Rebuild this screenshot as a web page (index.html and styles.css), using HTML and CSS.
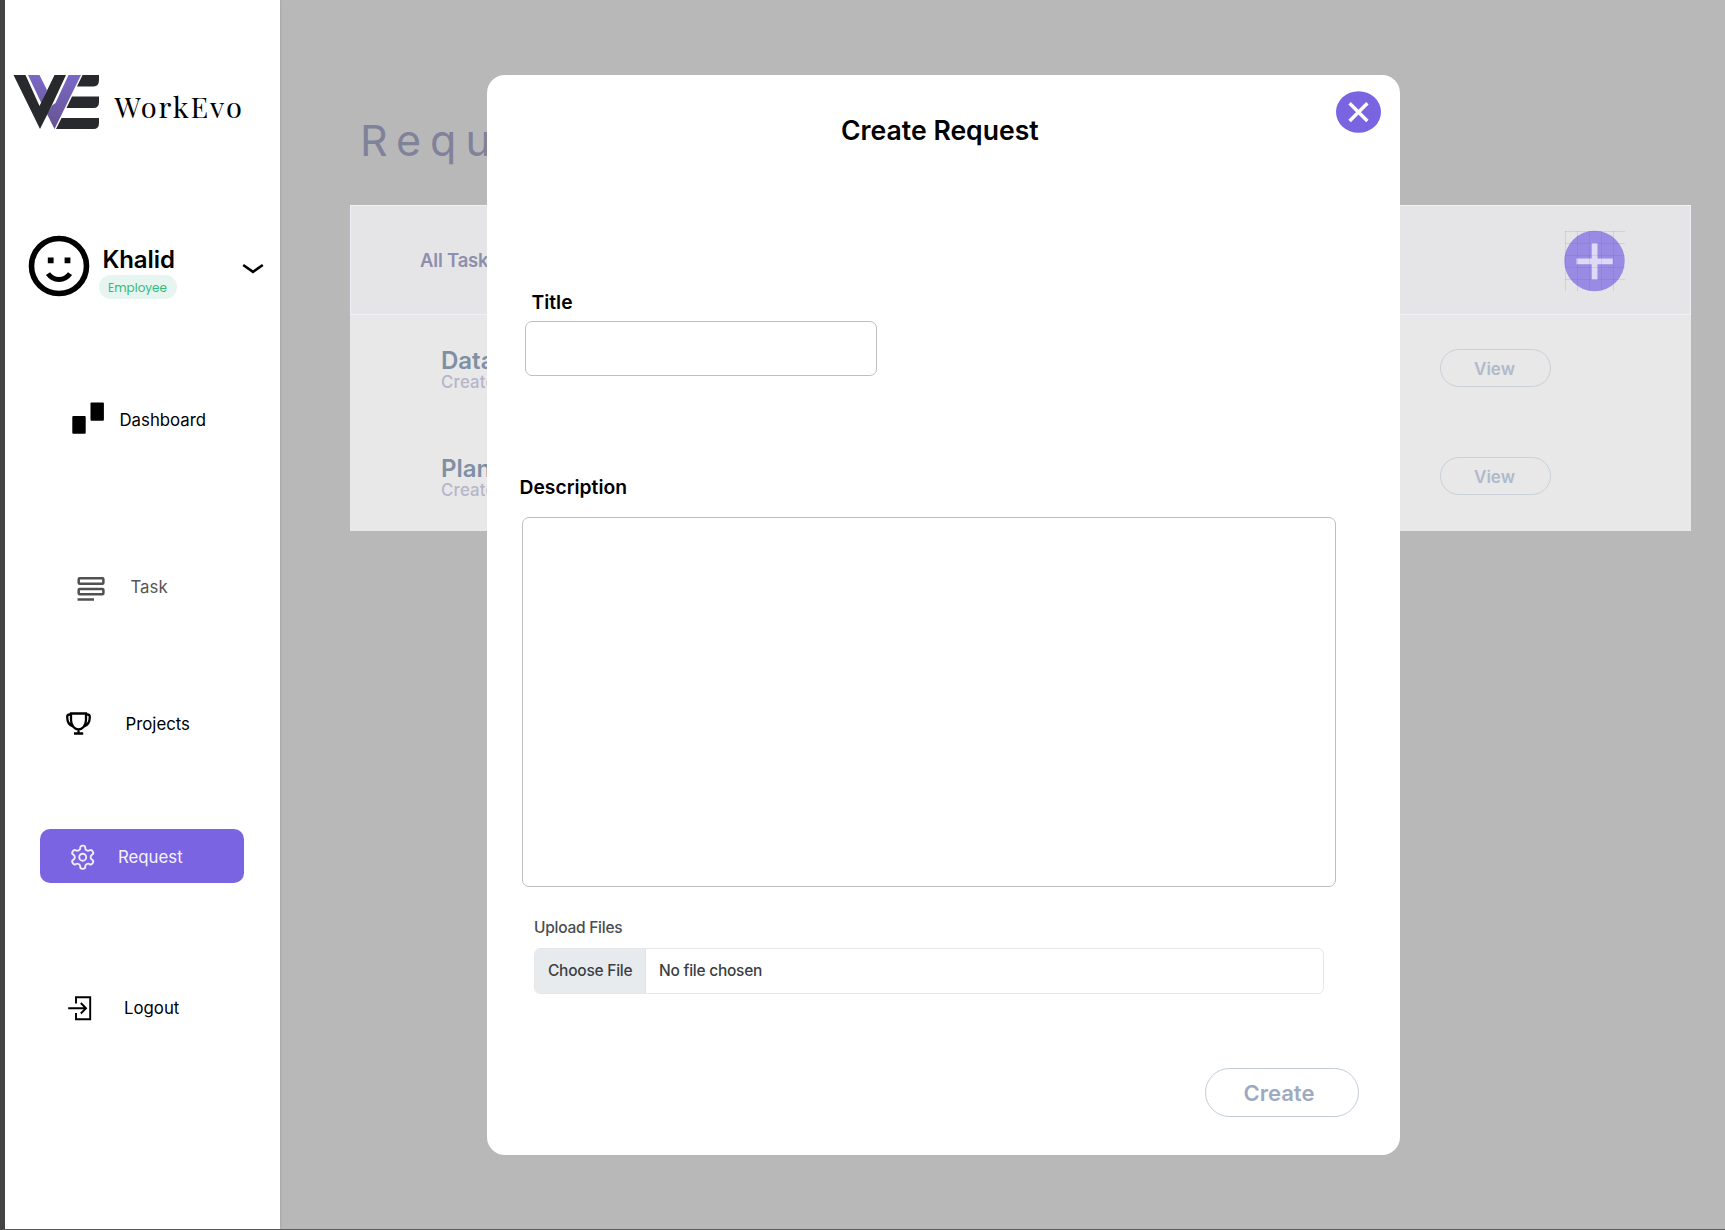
FILE: index.html
```html
<!DOCTYPE html>
<html lang="en">
<head>
<meta charset="utf-8">
<title>WorkEvo</title>
<link rel="stylesheet" href="styles.css">
</head>
<body>
<div class="app">
  <aside class="sidebar">
    <div class="brand">
      <svg class="brand-mark" width="87" height="56" viewBox="13 74 87 56">
        <defs><linearGradient id="violet" x1="0" y1="0" x2="0" y2="1"><stop offset="0" stop-color="#7a68c8"/><stop offset="1" stop-color="#66538f"/></linearGradient></defs>
        <path fill="url(#violet)" d="M28 75H39.500L47 90L41.500 103.500ZM68.500 75H81L54.500 129L47 114L52 105.500L55.500 103Z"/>
        <path fill="#28292c" d="M13.500 75H25.500L39.500 106L54.500 75H66L52 105L40 129ZM82.500 75H99V80Q99 86.500 93.500 86.500H77ZM72 96.500H99V102Q99 108 93.500 108H66.500ZM61.500 118H99V123Q99 129 93.500 129H56Z"/>
      </svg>
      <span class="brand-name">WorkEvo</span>
    </div>
    <div class="profile">
      <svg class="avatar" width="62" height="62" viewBox="0 0 62 62" fill="none" stroke="#000">
        <circle cx="31" cy="31" r="27.500" stroke-width="5.600"/>
        <path fill="#000" stroke="none" d="M19.800 22.500h5.800v5.800h-5.800zM36.600 22.500h5.800v5.800h-5.800z"/>
        <path d="M20 38.600Q24 44.400 31 44.400T42 38.600" stroke-width="5"/>
      </svg>
      <div class="who">
        <div class="who-name">Khalid</div>
        <div class="badge">Employee</div>
      </div>
      <svg class="chevron" width="22" height="12" viewBox="0 0 22 12" fill="none" stroke="#000" stroke-width="2.600"><path d="M1.200 2L11 8.800L20.800 2"/></svg>
    </div>
    <nav class="nav">
      <a class="item dashboard">
        <svg class="icon" width="70" height="54" viewBox="0 0 70 54"><rect x="32.300" y="24" width="13.400" height="17.800" rx="1"/><rect x="50.500" y="10.500" width="13.400" height="18.300" rx="1"/></svg>
        <span>Dashboard</span>
      </a>
      <a class="item task">
        <svg class="icon" width="70" height="54" viewBox="0 0 70 54" fill="none" stroke="#505050" stroke-width="2.500"><rect x="38.700" y="18.200" width="24.700" height="5.500" rx="1"/><rect x="38.700" y="29" width="24.700" height="5.300" rx="1"/><path d="M37.500 39.500H54"/></svg>
        <span>Task</span>
      </a>
      <a class="item projects">
        <svg class="icon" width="70" height="54" viewBox="0 0 70 54" fill="none" stroke="#000" stroke-width="2.300"><path d="M31 16.500H46V23C46 29 42 32.500 38.500 32.500S31 29 31 23ZM31 17.500H29.500Q27.200 17.500 27.200 20C27.200 25 28.500 28 33 29.500M46 17.500H47.500Q49.800 17.500 49.800 20C49.800 25 48.500 28 44 29.500M38.500 32V36M34 36.500H43.200"/></svg>
        <span>Projects</span>
      </a>
      <a class="item request active">
        <svg class="icon" width="70" height="54" viewBox="0 0 70 54" fill="none" stroke="#f1eefc" stroke-width="1.600"><g transform="translate(28.800 14.300) scale(1.160)"><path stroke-linejoin="round" d="M12.220 2h-.44a2 2 0 0 0-2 2v.18a2 2 0 0 1-1 1.730l-.43.25a2 2 0 0 1-2 0l-.15-.08a2 2 0 0 0-2.730.73l-.22.38a2 2 0 0 0 .73 2.730l.15.1a2 2 0 0 1 1 1.720v.51a2 2 0 0 1-1 1.740l-.15.09a2 2 0 0 0-.73 2.730l.22.38a2 2 0 0 0 2.730.73l.15-.08a2 2 0 0 1 2 0l.43.25a2 2 0 0 1 1 1.730V20a2 2 0 0 0 2 2h.44a2 2 0 0 0 2-2v-.18a2 2 0 0 1 1-1.730l.43-.25a2 2 0 0 1 2 0l.15.08a2 2 0 0 0 2.730-.73l.22-.39a2 2 0 0 0-.73-2.730l-.15-.08a2 2 0 0 1-1-1.740v-.5a2 2 0 0 1 1-1.740l.15-.09a2 2 0 0 0 .73-2.730l-.22-.38a2 2 0 0 0-2.730-.73l-.15.08a2 2 0 0 1-2 0l-.43-.25a2 2 0 0 1-1-1.730V4a2 2 0 0 0-2-2z"/><circle cx="12" cy="12" r="3"/></g></svg>
        <span>Request</span>
      </a>
      <a class="item logout">
        <svg class="icon" width="70" height="54" viewBox="0 0 70 54" fill="none" stroke="#000" stroke-width="1.900"><path d="M36 22.500V16.200H50.200V38.300H36V32M28.200 27.300H45.500M40.800 22L46 27.300L40.800 32.500"/></svg>
        <span>Logout</span>
      </a>
    </nav>
  </aside>

  <main class="main">
    <h1 class="page-title">Requests</h1>
    <section class="card">
      <header class="card-head">
        <span>All Tasks</span>
        <svg class="add" width="62" height="62" viewBox="0 0 62 62">
          <circle cx="31.500" cy="31" r="30.200" fill="#998ae4"/>
          <path fill="#dedaf5" d="M28.700 13.300h5.800v15.200h15.200v5.800h-15.200v15.200h-5.800v-15.200h-15.200v-5.800h15.200z"/>
          <path fill="none" stroke="#dc3c46" stroke-opacity=".16" d="M2.500 1V61M14.500 1V61M26.500 1V61M38.500 1V61M50.500 1V61M2 1.500H62M2 13.500H62M2 25.500H62M2 37.500H62M2 49.500H62"/>
        </svg>
      </header>
      <div class="row">
        <div><div class="row-title">Database</div><div class="row-sub">Created</div></div>
        <button class="view">View</button>
      </div>
      <div class="row">
        <div><div class="row-title">Planning</div><div class="row-sub">Created</div></div>
        <button class="view">View</button>
      </div>
    </section>
  </main>
</div>

<div class="modal">
  <div class="modal-head">
    <h2>Create Request</h2>
    <svg class="close" width="45" height="42" viewBox="0 0 45 42"><ellipse cx="22.500" cy="21" rx="22.500" ry="20.800" fill="#7a64e2"/><path d="M13.600 12.200L31.400 30M31.400 12.200L13.600 30" stroke="#fff" stroke-width="3.400"/></svg>
  </div>
  <label class="label title-label" for="t">Title</label>
  <input class="field title-field" id="t">
  <label class="label desc-label" for="d">Description</label>
  <textarea class="field desc-field" id="d"></textarea>
  <div class="upload-label">Upload Files</div>
  <div class="file"><span class="choose">Choose File</span><span class="none">No file chosen</span></div>
  <button class="create">Create</button>
</div>
</body>
</html>
```

FILE: styles.css
```css
* { box-sizing: border-box; }
body {
  margin: 0;
  height: 1230px;
  overflow: hidden;
  position: relative;
  background: #b8b8b8;
  font-family: Inter, "Liberation Sans", sans-serif;
  color: #000;
}
h1, h2 { margin: 0; font-weight: 400; }
svg { display: block; flex: none; }
button { font: inherit; padding: 0; background: transparent; }

.app {
  display: flex;
  height: 1230px;
  border-left: 5px solid #434343;
  border-bottom: 1px solid #5c5c5c;
}

/* Sidebar */
.sidebar {
  width: 275px;
  flex: none;
  background: #fff;
  box-shadow: 1px 0 2px rgba(0, 0, 0, .1);
}
.brand { display: flex; padding: 74px 0 0 8px; height: 130px; }
.brand-name {
  margin: 14px 0 0 14.5px;
  font: 29px/36px "Playfair Display", "Liberation Serif", serif;
  letter-spacing: 1.9px;
}
.profile { display: flex; height: 77px; margin-top: 105px; padding-left: 22.5px; }
.who { width: 80px; margin: 10px 0 0 9px; }
.who-name { padding-left: 4px; font-size: 24px; line-height: 30px; font-weight: 600; letter-spacing: -.1px; }
.badge {
  width: 78px;
  height: 24px;
  border-radius: 12px;
  background: #e6f5f0;
  color: #35b97c;
  font-family: Poppins, Inter, sans-serif;
  font-size: 12px;
  line-height: 25px;
  text-align: center;
}
.chevron { margin: 28px 0 0 63px; }

.nav { margin: 80px 0 0 35px; }
.item {
  display: flex;
  width: 204px;
  height: 54px;
  font-size: 16.8px;
  line-height: 55px;
}
.dashboard { gap: 9.5px; line-height: 56px; }
.task { margin-top: 114px; gap: 20.5px; color: #555; }
.projects { margin-top: 83px; gap: 15.5px; }
.request { margin-top: 78px; gap: 8px; line-height: 56px; }
.logout { margin-top: 98px; gap: 14px; }
.active { background: #7a64e2; border-radius: 10px; color: #f5f3fd; }

/* Page behind the dialog */
.main { flex: 1; padding: 114px 0 0 70px; }
.page-title {
  padding-left: 10px;
  font-size: 43px;
  line-height: 52px;
  letter-spacing: 9px;
  color: #80829a;
}
.card { width: 1341px; height: 326px; margin-top: 39px; background: #e8e8e8; }
.card-head {
  display: flex;
  justify-content: space-between;
  height: 110px;
  padding: 24px 65px 0 69px;
  border: 1px solid #f0f1f8;
  background: #e5e5e8;
  color: #8d8fac;
  font-size: 18.5px;
  line-height: 61px;
  font-weight: 600;
  letter-spacing: -.2px;
}
.row { display: flex; justify-content: space-between; height: 108px; padding: 32px 140px 0 91px; }
.row-title { font-size: 24px; line-height: 28px; font-weight: 600; color: #7f8fa4; }
.row-sub { font-size: 16.8px; line-height: 20px; font-weight: 500; color: #b5b6c8; margin-top: -3px; letter-spacing: .2px; }
.view {
  width: 111px;
  height: 38px;
  margin-top: 2px;
  padding-right: 2px;
  border: 1px solid #c9d0d9;
  border-radius: 19px;
  color: #b0bacb;
  font-size: 17px;
  font-weight: 600;
  line-height: 38px;
}

/* Dialog */
.modal {
  position: absolute;
  left: 487px;
  top: 74.5px;
  width: 913px;
  height: 1080px;
  display: flex;
  flex-direction: column;
  border-radius: 18px;
  background: #fff;
}
.modal-head { display: flex; justify-content: space-between; height: 58px; padding: 16.5px 19px 0 354px; }
.modal-head h2 { margin-top: 23px; font-size: 26.6px; line-height: 32px; font-weight: 600; white-space: nowrap; }
.label { font-size: 19.3px; line-height: 24px; font-weight: 600; }
.title-label { margin: 157.5px 0 0 44.5px; }
.field { display: block; border: 1px solid #bfbfbf; border-radius: 7px; background: #fff; padding: 0; resize: none; }
.title-field { width: 352px; height: 55px; margin: 7px 0 0 38px; }
.desc-label { margin: 99px 0 0 32.5px; }
.desc-field { width: 814px; height: 370px; margin: 18px 0 0 35px; }
.upload-label { margin: 30px 0 0 47px; font-size: 15.5px; line-height: 22px; font-weight: 500; letter-spacing: -.25px; color: #4a4d50; }
.file {
  display: flex;
  width: 790px;
  height: 46px;
  margin: 9px 0 0 47px;
  border: 1px solid #e6e7e9;
  border-radius: 6px;
  overflow: hidden;
  font-size: 15.5px;
  line-height: 44px;
  font-weight: 500;
  letter-spacing: -.25px;
  color: #3b3f43;
}
.choose { width: 111px; padding-left: 13px; background: #e8ebee; border-right: 1px solid #e0e3e6; }
.none { padding-left: 13px; }
.create {
  width: 154px;
  height: 49px;
  margin: 74px 0 0 718px;
  padding-right: 6px;
  border: 1.5px solid #c3cbd9;
  border-radius: 25px;
  color: #9dabc1;
  font-size: 22px;
  font-weight: 600;
}
```
